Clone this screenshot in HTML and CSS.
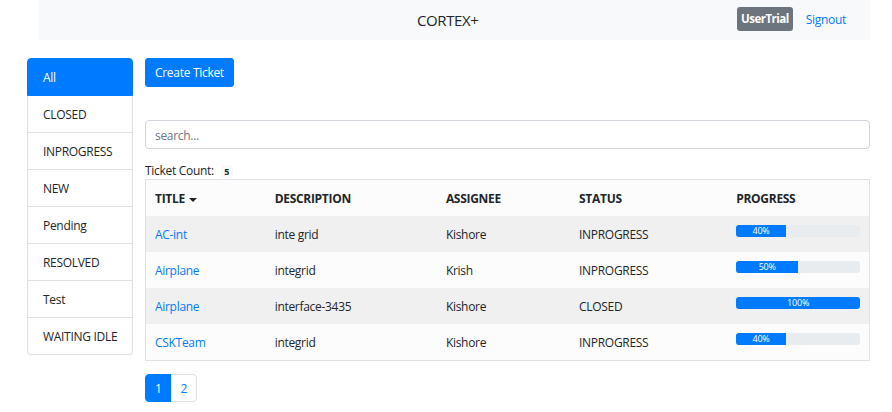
FILE: index.html
```html
<!DOCTYPE html>
<html lang="en">
<head>
<meta charset="utf-8">
<title>CORTEX+</title>
<link rel="stylesheet" href="styles.css">
</head>
<body>
<nav class="navbar">
  <span class="brand">CORTEX+</span>
  <div class="nav-right">
    <span class="user-badge">UserTrial</span>
    <a class="signout" href="#">Signout</a>
  </div>
</nav>
<div class="page">
  <ul class="side-list">
    <li class="side-item active">All</li>
    <li class="side-item">CLOSED</li>
    <li class="side-item">INPROGRESS</li>
    <li class="side-item">NEW</li>
    <li class="side-item">Pending</li>
    <li class="side-item">RESOLVED</li>
    <li class="side-item">Test</li>
    <li class="side-item">WAITING IDLE</li>
  </ul>
  <main class="content">
    <button class="btn-create" type="button">Create Ticket</button>
    <input class="search" type="text" placeholder="search...">
    <div class="count">Ticket Count: <span class="count-badge">5</span></div>
    <table class="tickets">
      <colgroup>
        <col class="c-title"><col class="c-desc"><col class="c-assignee"><col class="c-status"><col class="c-progress">
      </colgroup>
      <thead>
        <tr><th>TITLE<span class="caret"></span></th><th>DESCRIPTION</th><th>ASSIGNEE</th><th>STATUS</th><th>PROGRESS</th></tr>
      </thead>
      <tbody>
        <tr><td><a href="#">AC-int</a></td><td>inte grid</td><td>Kishore</td><td>INPROGRESS</td><td><div class="progress"><div class="bar" style="width:40%">40%</div></div></td></tr>
        <tr><td><a href="#">Airplane</a></td><td>integrid</td><td>Krish</td><td>INPROGRESS</td><td><div class="progress"><div class="bar" style="width:50%">50%</div></div></td></tr>
        <tr><td><a href="#">Airplane</a></td><td>interface-3435</td><td>Kishore</td><td>CLOSED</td><td><div class="progress"><div class="bar" style="width:100%">100%</div></div></td></tr>
        <tr><td><a href="#">CSKTeam</a></td><td>integrid</td><td>Kishore</td><td>INPROGRESS</td><td><div class="progress"><div class="bar" style="width:40%">40%</div></div></td></tr>
      </tbody>
    </table>
    <ul class="pagination">
      <li class="page-link active">1</li>
      <li class="page-link">2</li>
    </ul>
  </main>
</div>
</body>
</html>
```
FILE: styles.css
```css
* { box-sizing: border-box; }
body {
  margin: 0;
  font-family: "Open Sans", "Noto Sans", sans-serif;
  font-size: 12px;
  line-height: 18px;
  letter-spacing: -0.3px;
  color: #212529;
  background: #fff;
}
a { color: #007bff; text-decoration: none; }

.navbar {
  margin: 0 22px 0 38px;
  height: 40px;
  background: #f8f9fa;
  display: flex;
  align-items: center;
}
.brand {
  margin-left: 379px;
  font-size: 15px;
  letter-spacing: -0.4px;
  color: #212529;
}
.nav-right {
  margin-left: auto;
  margin-right: 24px;
  display: flex;
  align-items: center;
  gap: 13px;
}
.user-badge {
  background: #6c757d;
  color: #fff;
  font-weight: 700;
  font-size: 11.5px;
  letter-spacing: -0.5px;
  line-height: 18px;
  padding: 3px 4px;
  border-radius: 3px;
  margin-top: -2px;
}
.signout { font-size: 12px; }

.page {
  display: flex;
  align-items: flex-start;
  gap: 12px;
  padding: 18px 22px 0 27px;
}
.side-list {
  width: 106px;
  flex: none;
  margin: 0;
  padding: 0;
  list-style: none;
}
.side-item {
  padding: 10px 15px 8px;
  border: 1px solid #dee2e6;
  border-top-width: 0;
  white-space: nowrap;
}
.side-item:first-child { border-top-width: 1px; border-radius: 4px 4px 0 0; }
.side-item:last-child { border-radius: 0 0 4px 4px; }
.side-item.active { background: #007bff; border-color: #007bff; color: #fff; }

.content { flex: 1; min-width: 0; }
.btn-create {
  display: block;
  font-family: inherit;
  font-size: 12px;
  letter-spacing: inherit;
  line-height: 18px;
  padding: 5px 9px 4px;
  background: #007bff;
  color: #fff;
  border: 1px solid #007bff;
  border-radius: 3px;
}
.search {
  display: block;
  width: 100%;
  height: 29px;
  margin-top: 33px;
  padding: 5px 9px 4px;
  font-family: inherit;
  font-size: 12px;
  letter-spacing: inherit;
  color: #495057;
  border: 1px solid #ced4da;
  border-radius: 4px;
}
.search::placeholder { color: #6c757d; }
.count { margin-top: 12px; padding-top: 1px; height: 18px; line-height: 18px; }
.count-badge {
  display: inline-block;
  background: #f8f9fa;
  font-size: 9px;
  font-weight: 700;
  line-height: 1;
  padding: 2px 3.6px;
  border-radius: 3px;
  margin-left: 4px;
}

.tickets {
  width: 100%;
  table-layout: fixed;
  border-collapse: collapse;
  border: 1px solid #dee2e6;
  background: #fcfcfc;
}
.c-title { width: 120px; }
.c-desc { width: 171px; }
.c-assignee { width: 133px; }
.c-status { width: 157px; }
.c-progress { width: 142px; }
.tickets th, .tickets td {
  padding: 10px 9px 8px;
  text-align: left;
  vertical-align: top;
  line-height: 18px;
  white-space: nowrap;
}
.tickets th { font-weight: 700; }
.tickets tbody tr:nth-child(odd) { background: #f0f0f0; }
.caret {
  display: inline-block;
  width: 0;
  height: 0;
  margin-left: 4px;
  vertical-align: middle;
  border-top: 4px solid #212529;
  border-left: 4px solid transparent;
  border-right: 4px solid transparent;
}
.progress {
  height: 12px;
  margin-top: -1px;
  background: #e9ecef;
  border-radius: 3px;
  overflow: hidden;
  display: flex;
}
.bar {
  background: #007bff;
  color: #fff;
  font-size: 9px;
  letter-spacing: -0.2px;
  line-height: 12px;
  text-align: center;
}

.pagination {
  display: flex;
  list-style: none;
  margin: 13px 0 0;
  padding: 0;
}
.page-link {
  padding: 7px 9px 5px;
  line-height: 14px;
  border: 1px solid #dee2e6;
  color: #007bff;
  background: #fff;
}
.page-link + .page-link { margin-left: -1px; }
.page-link:first-child { border-radius: 4px 0 0 4px; }
.page-link:last-child { border-radius: 0 4px 4px 0; }
.page-link.active { background: #007bff; border-color: #007bff; color: #fff; }
```
